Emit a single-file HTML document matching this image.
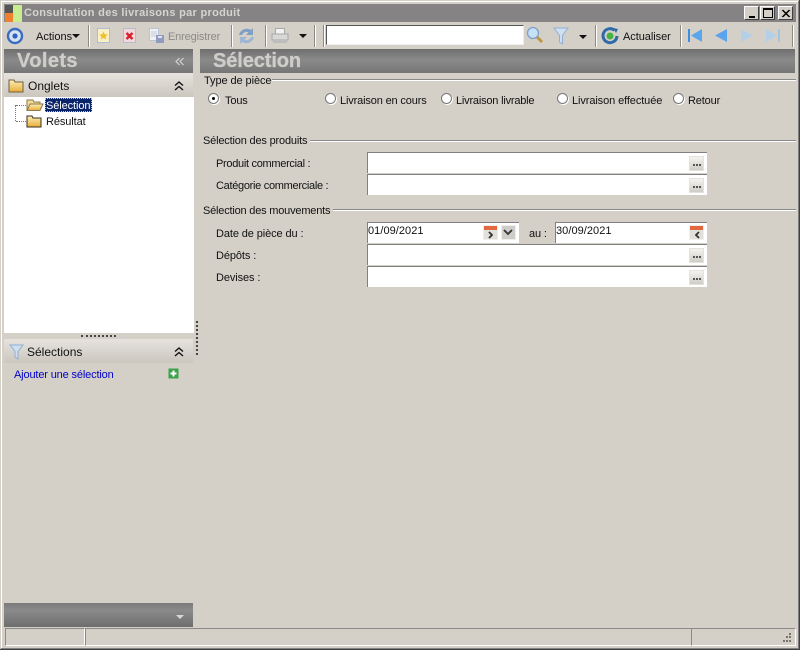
<!DOCTYPE html>
<html><head><meta charset="utf-8"><title>Consultation des livraisons par produit</title>
<style>
html,body{margin:0;padding:0;background:#d4d0c8}
#w{position:relative;width:800px;height:650px;overflow:hidden;background:#d4d0c8;font:11px "Liberation Sans",sans-serif;color:#111}
.a,.t,svg.a{position:absolute}
.t{white-space:nowrap;line-height:13px;margin-top:2px;letter-spacing:-.15px}
.a{display:block}
.in{position:absolute;background:#fff;border-top:1px solid #808080;border-left:1px solid #808080;box-sizing:border-box}
.dots{position:absolute;width:15px;height:15px;background:linear-gradient(#f4f3f0,#cfccc5);border:1px solid #e4e2dd;box-sizing:border-box;color:#333}
.dots:after{content:"";position:absolute;left:3px;top:7px;width:2px;height:2px;background:#555;box-shadow:3px 0 #555,6px 0 #555}
.r{position:absolute;width:11px;height:11px;border-radius:50%;background:#fff;border:1px solid #777;box-sizing:border-box;box-shadow:1px 1px 0 #fff}
.sep{position:absolute;top:25px;width:1px;height:22px;background:#8d8a84;box-shadow:1px 0 #fff}
.hl{position:absolute;height:1px;background:#8a8a8a;box-shadow:0 1px #fff}
.cal{position:absolute;width:15px;height:15px;background:#e2e0da;border:1px solid #eee;box-sizing:border-box}
.cal:before{content:"";position:absolute;left:0;right:0;top:0;height:4px;background:#e2683f}
.cal svg{position:absolute;left:3px;top:5px}
.wb{position:absolute;top:6px;width:15px;height:14px;background:#d4d0c8;border-top:1px solid #fff;border-left:1px solid #fff;border-right:1px solid #404040;border-bottom:1px solid #404040;box-sizing:border-box}
.head{font:bold 20px/22px "Liberation Sans",sans-serif;color:#cfcdc9;-webkit-text-stroke:.3px #cfcdc9;margin-top:0}
</style></head><body><div id="w">
<!-- frame -->
<div class="a" style="left:0;top:0;width:800px;height:1px;background:#d4d0c8"></div>
<div class="a" style="left:1px;top:1px;width:798px;height:1px;background:#fff"></div>
<div class="a" style="left:0;top:0;width:1px;height:650px;background:#d4d0c8"></div>
<div class="a" style="left:1px;top:1px;width:1px;height:648px;background:#fff"></div>
<div class="a" style="left:799px;top:0;width:1px;height:650px;background:#404040"></div>
<div class="a" style="left:798px;top:1px;width:1px;height:648px;background:#808080"></div>
<div class="a" style="left:0;top:649px;width:800px;height:1px;background:#404040"></div>
<div class="a" style="left:1px;top:648px;width:798px;height:1px;background:#808080"></div>
<!-- title -->
<div class="a" style="left:4px;top:4px;width:792px;height:18px;background:#858384"></div>
<div class="a" style="left:5px;top:5px;width:8px;height:8px;background:#555"></div>
<div class="a" style="left:5px;top:13px;width:8px;height:9px;background:#f08030"></div>
<div class="a" style="left:13px;top:5px;width:9px;height:17px;background:#c8ec90"></div>
<div class="t" style="left:24px;top:5px;font-weight:bold;color:#d6d4d0;letter-spacing:.3px">Consultation des livraisons par produit</div>
<div class="wb" style="left:744px"><div class="a" style="left:4px;top:9px;width:6px;height:2px;background:#000"></div></div>
<div class="wb" style="left:760px"><div class="a" style="left:2px;top:1px;width:10px;height:10px;border:1px solid #000;border-top-width:2px;box-sizing:border-box"></div></div>
<div class="wb" style="left:778px"><svg class="a" style="left:2px;top:2px" width="10" height="9"><path d="M1 1l7 7M2 1l7 7M8 1l-7 7M9 1l-7 7" stroke="#000" stroke-width=".8"/></svg></div>
<!-- toolbar -->
<svg class="a" style="left:6px;top:27px" width="18" height="18"><circle cx="9" cy="9" r="7" fill="#d8e4f4" stroke="#3a6cc0" stroke-width="2.4"/><circle cx="9" cy="9" r="2.6" fill="#2f62bd"/></svg>
<div class="t" style="left:36px;top:29px;letter-spacing:0">Actions</div>
<svg class="a" style="left:72px;top:34px" width="8" height="5"><path d="M0 0h8L4 4z" fill="#111"/></svg>
<div class="sep" style="left:88px"></div>
<svg class="a" style="left:96px;top:28px" width="15" height="16"><rect x="1.500" y=".5" width="12" height="14" fill="#faf0c8" stroke="#b0bcd2"/><path d="M7.500 3.500l1.300 2.700 3 .3-2.200 2 .6 3-2.700-1.500L4.800 11.500l.6-3-2.200-2 3-.3z" fill="#eec22e"/></svg>
<svg class="a" style="left:122px;top:28px" width="15" height="16"><rect x="1.500" y=".5" width="12" height="14" fill="#f0d8dc" stroke="#b4bcd0"/><path d="M4.500 5l6 6M10.500 5l-6 6" stroke="#d8202c" stroke-width="2.400"/></svg>
<svg class="a" style="left:148px;top:28px" width="17" height="16"><rect x="1.500" y=".5" width="9" height="12" fill="#eef0f4" stroke="#bcc4d2"/><path d="M3 4h6M3 6h6M3 8h6" stroke="#c8ccd8"/><rect x="8" y="7" width="8" height="8" fill="#8f9cc0"/><rect x="10" y="8" width="4" height="2" fill="#dfe3ee"/></svg>
<div class="t" style="left:168px;top:29px;color:#8b8a86">Enregistrer</div>
<div class="sep" style="left:231px"></div>
<svg class="a" style="left:237px;top:26px" width="19" height="20"><path d="M2 9C3 4 9 1 14 4l2-2v7h-7l2.500-2.500C9 5 6 6.500 5 9z" fill="#7f9fc4"/><path d="M17 11c-1 5-7 8-12 5l-2 2v-7h7l-2.500 2.500c2.500 1.500 5.500 0 6.500-2.500z" fill="#9db6d4"/></svg>
<div class="sep" style="left:265px"></div>
<svg class="a" style="left:271px;top:27px" width="18" height="18"><rect x="4.500" y="1.500" width="9" height="6" fill="#f2f2f0" stroke="#aaa"/><rect x="1" y="7" width="16" height="6" fill="#d8d8d6" stroke="#a6a6a4"/><rect x="2" y="13" width="14" height="3" fill="#bdbdbd"/></svg>
<svg class="a" style="left:299px;top:34px" width="8" height="5"><path d="M0 0h8L4 4z" fill="#111"/></svg>
<div class="sep" style="left:314px"></div>
<div class="sep" style="left:323px"></div>
<div class="a" style="left:326px;top:25px;width:198px;height:20px;background:#fff;border-top:1px solid #555;border-left:1px solid #555;border-right:1px solid #eee;border-bottom:1px solid #eee;box-sizing:border-box"></div>
<svg class="a" style="left:526px;top:26px" width="18" height="18"><path d="M10 10l6 6" stroke="#c09640" stroke-width="3"/><circle cx="7" cy="7" r="5.500" fill="#c6e0f6" stroke="#7f9fc8" stroke-width="1.300"/></svg>
<svg class="a" style="left:553px;top:27px" width="16" height="18"><path d="M1 1h14L9.500 8.500V17L6.500 15V8.500z" fill="#cfdff0" stroke="#8fb0d4"/></svg>
<svg class="a" style="left:579px;top:35px" width="8" height="5"><path d="M0 0h8L4 4z" fill="#111"/></svg>
<div class="sep" style="left:595px"></div>
<svg class="a" style="left:601px;top:27px" width="18" height="18"><path d="M13.500 3.300A7 7 0 1 0 16 9" fill="none" stroke="#2e6aa8" stroke-width="3"/><circle cx="9" cy="9" r="3.500" fill="#48b040"/><path d="M12 1l5 1-2 4z" fill="#2e6aa8"/></svg>
<div class="t" style="left:623px;top:29px;letter-spacing:-.05px">Actualiser</div>
<div class="sep" style="left:680px"></div>
<svg class="a" style="left:687px;top:28px" width="16" height="16"><path d="M1 1h2v13H1z" fill="#3b8ee0"/><path d="M15 1v13L4 7.500z" fill="#5aa6ec"/></svg>
<svg class="a" style="left:714px;top:28px" width="15" height="16"><path d="M13 1v13L1 7.500z" fill="#5aa4ee"/></svg>
<svg class="a" style="left:740px;top:28px" width="14" height="16"><path d="M1 1v13L13 7.500z" fill="#b4cfe8"/></svg>
<svg class="a" style="left:765px;top:28px" width="16" height="16"><path d="M1 1v13L12 7.500z" fill="#b4cfe8"/><path d="M13 1h2v13h-2z" fill="#a6c4e0"/></svg>
<div class="sep" style="left:792px"></div>
<!-- headers -->
<div class="a" style="left:4px;top:49px;width:189px;height:24px;background:linear-gradient(#6f6f6f,#8a8a8a 45%,#767676)"></div>
<div class="a" style="left:200px;top:49px;width:595px;height:24px;background:linear-gradient(#6f6f6f,#8a8a8a 45%,#767676)"></div>
<div class="t head" style="left:17px;top:50px;letter-spacing:.4px">Volets</div>
<div class="t head" style="left:213px;top:50px;letter-spacing:-.1px">Sélection</div>
<svg class="a" style="left:175px;top:57px" width="10" height="9"><path d="M4.500 1L1 4.500 4.500 8M8.500 1L5 4.500 8.500 8" fill="none" stroke="#d8d8d8" stroke-width="1.100"/></svg>
<!-- left panel -->
<div class="a" style="left:4px;top:73px;width:189px;height:24px;background:linear-gradient(#e6e3de,#cbc7bf)"></div>
<svg class="a" style="left:8px;top:78px" width="16" height="15"><defs><linearGradient id="g" x1="0" y1="0" x2="0" y2="1"><stop offset="0" stop-color="#fdf0b8"/><stop offset="1" stop-color="#e8ac38"/></linearGradient></defs><path d="M1 2h5l1 2h8v10H1z" fill="url(#g)" stroke="#6e6040"/></svg>
<div class="t" style="left:28px;top:77px;font-size:12px;line-height:14px;letter-spacing:0">Onglets</div>
<svg class="a" style="left:174px;top:81px" width="10" height="10"><path d="M1 4.500L5 1l4 3.500M1 9L5 5.500 9 9" fill="none" stroke="#111" stroke-width="1.400"/></svg>
<div class="a" style="left:4px;top:97px;width:190px;height:236px;background:#fff"></div>
<div class="a" style="left:15px;top:105px;height:16px;border-left:1px dotted #777"></div>
<div class="a" style="left:16px;top:105px;width:10px;border-top:1px dotted #777"></div>
<div class="a" style="left:16px;top:121px;width:10px;border-top:1px dotted #777"></div>
<svg class="a" style="left:26px;top:98px" width="18" height="14"><path d="M1 12V2h6l1 2h6v2" fill="#f4dc94" stroke="#8a7a50"/><path d="M1 12.500L4 6h13l-3 6.500z" fill="url(#g)" stroke="#8a7a50"/></svg>
<svg class="a" style="left:26px;top:114px" width="16" height="14"><path d="M1 2h5l1 2h8v9H1z" fill="url(#g)" stroke="#3a3020"/></svg>
<div class="a" style="left:45px;top:98px;width:47px;height:14px;background:#0a246a;outline:1px dotted #d8c878;outline-offset:-1px"></div>
<div class="t" style="left:46px;top:98px;color:#fff;letter-spacing:-.1px">Sélection</div>
<div class="t" style="left:46px;top:114px;letter-spacing:-.1px">Résultat</div>
<div class="a" style="left:81px;top:335px;width:35px;height:1px;border-top:2px dotted #444"></div>
<div class="a" style="left:196px;top:321px;width:1px;height:34px;border-left:2px dotted #444"></div>
<div class="a" style="left:4px;top:339px;width:189px;height:24px;background:linear-gradient(#e6e3de,#cbc7bf)"></div>
<svg class="a" style="left:9px;top:344px" width="15" height="16"><path d="M1 1h13L9 7.500V15L6 13V7.500z" fill="#cfdff0" stroke="#8fb0d4"/></svg>
<div class="t" style="left:27px;top:343px;font-size:12px;line-height:14px;letter-spacing:0">Sélections</div>
<svg class="a" style="left:174px;top:347px" width="10" height="10"><path d="M1 4.500L5 1l4 3.500M1 9L5 5.500 9 9" fill="none" stroke="#111" stroke-width="1.400"/></svg>
<div class="t" style="left:14px;top:367px;color:#0000c8">Ajouter une sélection</div>
<svg class="a" style="left:168px;top:368px" width="11" height="11"><rect width="10" height="10" x=".5" y=".5" fill="#3aa24a"/><path d="M5.500 2.500v6M2.500 5.500h6" stroke="#fff" stroke-width="2"/></svg>
<div class="a" style="left:4px;top:603px;width:189px;height:24px;background:linear-gradient(#7a7a7a,#8a8a8a 30%,#6e6e6e)"></div>
<svg class="a" style="left:176px;top:615px" width="8" height="5"><path d="M0 0h8L4 4z" fill="#d8d8d8"/></svg>
<!-- form -->
<div class="t" style="left:204px;top:73px;letter-spacing:-.08px">Type de pièce</div>
<div class="hl" style="left:272px;top:79px;width:524px"></div>
<div class="r" style="left:208px;top:93px"><div class="a" style="left:3px;top:3px;width:3px;height:3px;border-radius:50%;background:#000"></div></div>
<div class="t" style="left:225px;top:93px">Tous</div>
<div class="r" style="left:325px;top:93px"></div>
<div class="t" style="left:340px;top:93px">Livraison en cours</div>
<div class="r" style="left:441px;top:93px"></div>
<div class="t" style="left:456px;top:93px;letter-spacing:-.2px">Livraison livrable</div>
<div class="r" style="left:557px;top:93px"></div>
<div class="t" style="left:572px;top:93px;letter-spacing:-.1px">Livraison effectuée</div>
<div class="r" style="left:673px;top:93px"></div>
<div class="t" style="left:688px;top:93px">Retour</div>

<div class="t" style="left:203px;top:133px;letter-spacing:-.18px">Sélection des produits</div>
<div class="hl" style="left:310px;top:140px;width:486px"></div>
<div class="t" style="left:216px;top:156px;letter-spacing:-.3px">Produit commercial :</div>
<div class="in" style="left:367px;top:152px;width:340px;height:21px"></div><div class="dots" style="left:689px;top:156px"></div>
<div class="t" style="left:216px;top:178px;letter-spacing:-.3px">Catégorie commerciale :</div>
<div class="in" style="left:367px;top:174px;width:340px;height:21px"></div><div class="dots" style="left:689px;top:178px"></div>

<div class="t" style="left:203px;top:203px;letter-spacing:-.2px">Sélection des mouvements</div>
<div class="hl" style="left:333px;top:209px;width:463px"></div>
<div class="t" style="left:216px;top:226px;letter-spacing:-.1px">Date de pièce du :</div>
<div class="in" style="left:367px;top:222px;width:152px;height:21px"></div>
<div class="t" style="left:368px;top:223px;letter-spacing:.05px">01/09/2021</div>
<div class="cal" style="left:483px;top:225px"><svg width="8" height="8"><path d="M2 1l3 3-3 3" fill="none" stroke="#333" stroke-width="1.800"/></svg></div>
<div class="a" style="left:501px;top:225px;width:15px;height:15px;background:#cfcdc7;border:1px solid #eee;box-sizing:border-box"></div>
<svg class="a" style="left:503px;top:229px" width="10" height="7"><path d="M1 1l4 4 4-4" fill="none" stroke="#333" stroke-width="1.800"/></svg>
<div class="t" style="left:529px;top:226px">au :</div>
<div class="in" style="left:555px;top:222px;width:152px;height:21px"></div>
<div class="t" style="left:556px;top:223px;letter-spacing:.05px">30/09/2021</div>
<div class="cal" style="left:689px;top:225px"><svg width="8" height="8"><path d="M6 1L3 4l3 3" fill="none" stroke="#333" stroke-width="1.800"/></svg></div>
<div class="t" style="left:216px;top:248px;letter-spacing:-.1px">Dépôts :</div>
<div class="in" style="left:367px;top:244px;width:340px;height:21px"></div><div class="dots" style="left:689px;top:248px"></div>
<div class="t" style="left:216px;top:270px;letter-spacing:-.1px">Devises :</div>
<div class="in" style="left:367px;top:266px;width:340px;height:21px"></div><div class="dots" style="left:689px;top:270px"></div>
<!-- status -->
<div class="a" style="left:5px;top:628px;width:78px;height:16px;border:1px solid;border-color:#8a8a8a #fff #fff #8a8a8a"></div>
<div class="a" style="left:85px;top:628px;width:605px;height:16px;border:1px solid;border-color:#8a8a8a #fff #fff #8a8a8a"></div>
<div class="a" style="left:691px;top:628px;width:103px;height:16px;border:1px solid;border-color:#8a8a8a #fff #fff #8a8a8a"></div>
<svg class="a" style="left:780px;top:632px" width="13" height="13"><g fill="#77736c"><rect x="9" y="1" width="2" height="2"/><rect x="6" y="4" width="2" height="2"/><rect x="9" y="4" width="2" height="2"/><rect x="3" y="8" width="2" height="2"/><rect x="6" y="8" width="2" height="2"/><rect x="9" y="8" width="2" height="2"/></g></svg>
</div></body></html>
